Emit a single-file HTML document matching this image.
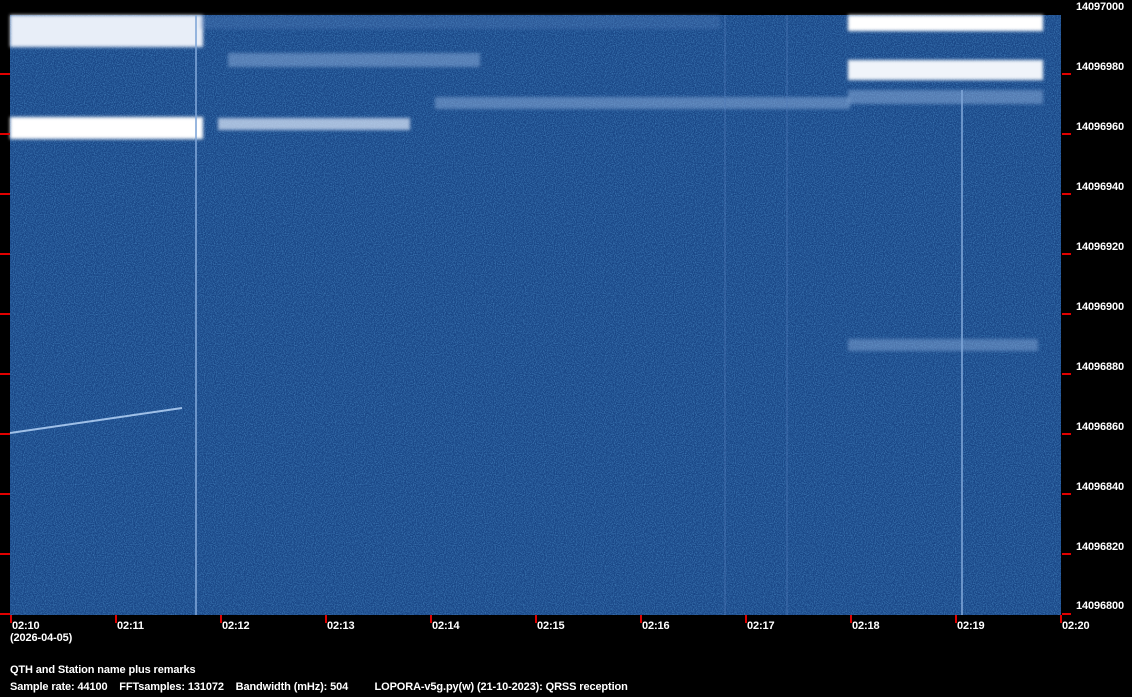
<!DOCTYPE html>
<html><head><meta charset="utf-8"><style>
body{margin:0;background:#000;width:1132px;height:697px;overflow:hidden;position:relative;font-family:"Liberation Sans",sans-serif;font-weight:bold;font-size:11px;color:#fff}
.t{position:absolute;white-space:pre;line-height:12px;letter-spacing:-0.12px}
.r{position:absolute;background:#e00000}
</style></head><body>
<svg width="1132" height="697" style="position:absolute;left:0;top:0">
<defs>
<filter id="n" x="0" y="0" width="100%" height="100%">
<feTurbulence type="fractalNoise" baseFrequency="0.9" numOctaves="2" seed="3"/>
<feColorMatrix type="matrix" values="0 0 0 0 0.1  0 0 0 0 0.35  0 0 0 0 0.7  1.2 0 0 0 -0.45"/>
</filter>
<filter id="b"><feGaussianBlur stdDeviation="1.5"/></filter>
</defs>
<rect x="10" y="15" width="1051" height="600" fill="#194686"/>
<rect x="10" y="15" width="1051" height="600" filter="url(#n)"/>
<g filter="url(#b)">
<rect x="10" y="15" width="193" height="32" fill="#e8eef8"/>
<rect x="10" y="117" width="193" height="22" fill="#fff"/>
<rect x="218" y="118" width="192" height="12" fill="#c8d8ef" opacity="0.8"/>
<rect x="228" y="53" width="252" height="14" fill="#8fb0dc" opacity="0.5"/>
<rect x="435" y="97" width="415" height="12" fill="#8fb0dc" opacity="0.5"/>
<rect x="848" y="15" width="195" height="16" fill="#fff"/>
<rect x="848" y="60" width="195" height="20" fill="#f0f4fa"/>
<rect x="848" y="90" width="195" height="14" fill="#8fb0dc" opacity="0.5"/>
<rect x="848" y="339" width="190" height="12" fill="#8fb0dc" opacity="0.45"/>
<rect x="200" y="15" width="520" height="14" fill="#5e86c0" opacity="0.3"/>
</g>
<line x1="10" y1="433" x2="182" y2="408" stroke="#9fc0e8" stroke-width="2"/>
<g stroke="#7fa6d8" stroke-width="2" opacity="0.8">
<line x1="196" y1="15" x2="196" y2="615"/>
<line x1="962" y1="90" x2="962" y2="615"/>
</g>
<g stroke="#4f7ab8" stroke-width="1" opacity="0.7">
<line x1="725" y1="15" x2="725" y2="615"/>
<line x1="787" y1="15" x2="787" y2="615"/>
</g>
</svg>
<div class="r" style="left:0;top:73px;width:10px;height:2px"></div>
<div class="r" style="left:0;top:133px;width:10px;height:2px"></div>
<div class="r" style="left:0;top:193px;width:10px;height:2px"></div>
<div class="r" style="left:0;top:253px;width:10px;height:2px"></div>
<div class="r" style="left:0;top:313px;width:10px;height:2px"></div>
<div class="r" style="left:0;top:373px;width:10px;height:2px"></div>
<div class="r" style="left:0;top:433px;width:10px;height:2px"></div>
<div class="r" style="left:0;top:493px;width:10px;height:2px"></div>
<div class="r" style="left:0;top:553px;width:10px;height:2px"></div>
<div class="r" style="left:0;top:613px;width:10px;height:2px"></div>
<div class="r" style="left:1062px;top:73px;width:9px;height:2px"></div>
<div class="r" style="left:1062px;top:133px;width:9px;height:2px"></div>
<div class="r" style="left:1062px;top:193px;width:9px;height:2px"></div>
<div class="r" style="left:1062px;top:253px;width:9px;height:2px"></div>
<div class="r" style="left:1062px;top:313px;width:9px;height:2px"></div>
<div class="r" style="left:1062px;top:373px;width:9px;height:2px"></div>
<div class="r" style="left:1062px;top:433px;width:9px;height:2px"></div>
<div class="r" style="left:1062px;top:493px;width:9px;height:2px"></div>
<div class="r" style="left:1062px;top:553px;width:9px;height:2px"></div>
<div class="r" style="left:1062px;top:613px;width:9px;height:2px"></div>
<div class="r" style="left:10px;top:615px;width:2px;height:8px"></div>
<div class="r" style="left:115px;top:615px;width:2px;height:8px"></div>
<div class="r" style="left:220px;top:615px;width:2px;height:8px"></div>
<div class="r" style="left:325px;top:615px;width:2px;height:8px"></div>
<div class="r" style="left:430px;top:615px;width:2px;height:8px"></div>
<div class="r" style="left:535px;top:615px;width:2px;height:8px"></div>
<div class="r" style="left:640px;top:615px;width:2px;height:8px"></div>
<div class="r" style="left:745px;top:615px;width:2px;height:8px"></div>
<div class="r" style="left:850px;top:615px;width:2px;height:8px"></div>
<div class="r" style="left:955px;top:615px;width:2px;height:8px"></div>
<div class="r" style="left:1060px;top:615px;width:2px;height:8px"></div>
<div class="t" style="left:1076px;top:1px">14097000</div>
<div class="t" style="left:1076px;top:61px">14096980</div>
<div class="t" style="left:1076px;top:121px">14096960</div>
<div class="t" style="left:1076px;top:181px">14096940</div>
<div class="t" style="left:1076px;top:241px">14096920</div>
<div class="t" style="left:1076px;top:301px">14096900</div>
<div class="t" style="left:1076px;top:361px">14096880</div>
<div class="t" style="left:1076px;top:421px">14096860</div>
<div class="t" style="left:1076px;top:481px">14096840</div>
<div class="t" style="left:1076px;top:541px">14096820</div>
<div class="t" style="left:1076px;top:600px">14096800</div>
<div class="t" style="left:12px;top:620px">02:10</div>
<div class="t" style="left:117px;top:620px">02:11</div>
<div class="t" style="left:222px;top:620px">02:12</div>
<div class="t" style="left:327px;top:620px">02:13</div>
<div class="t" style="left:432px;top:620px">02:14</div>
<div class="t" style="left:537px;top:620px">02:15</div>
<div class="t" style="left:642px;top:620px">02:16</div>
<div class="t" style="left:747px;top:620px">02:17</div>
<div class="t" style="left:852px;top:620px">02:18</div>
<div class="t" style="left:957px;top:620px">02:19</div>
<div class="t" style="left:1062px;top:620px">02:20</div>
<div class="t" style="left:10px;top:632px">(2026-04-05)</div>
<div class="t" style="left:10px;top:664px">QTH and Station name plus remarks</div>
<div class="t" style="left:10px;top:681px">Sample rate: 44100    FFTsamples: 131072    Bandwidth (mHz): 504         LOPORA-v5g.py(w) (21-10-2023): QRSS reception</div>
</body></html>
